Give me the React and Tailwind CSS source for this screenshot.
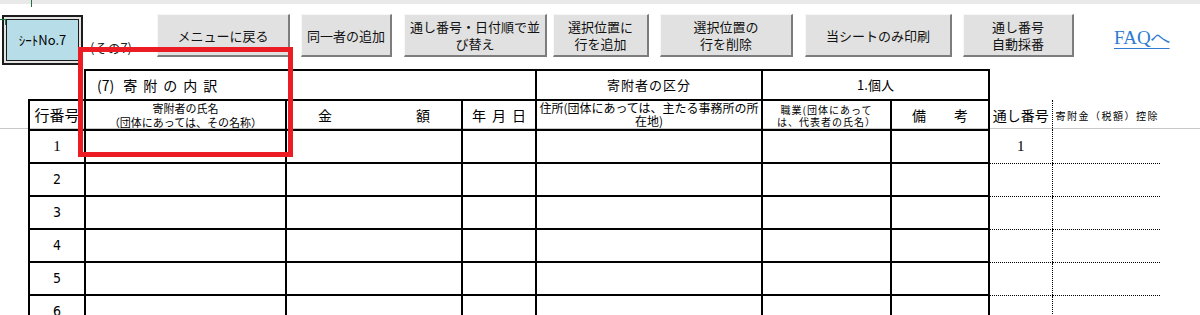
import React from 'react';

// 上部ボタン（幅と左マージンはクラス文字列で渡す）
const BUTTONS = [
  { w: 'w-[133px]', ml: 'ml-0', lines: ['メニューに戻る'] },
  { w: 'w-[91px]', ml: 'ml-[11px]', lines: ['同一者の追加'] },
  { w: 'w-[143px]', ml: 'ml-[12px]', lines: ['通し番号・日付順で並', 'び替え'] },
  { w: 'w-[96px]', ml: 'ml-[6px]', lines: ['選択位置に', '行を追加'] },
  { w: 'w-[133px]', ml: 'ml-[11px]', lines: ['選択位置の', '行を削除'] },
  { w: 'w-[147px]', ml: 'ml-[12px]', lines: ['当シートのみ印刷'] },
  { w: 'w-[111px]', ml: 'ml-[11px]', lines: ['通し番号', '自動採番'] },
];

function SheetButton({ w, ml, lines }) {
  return (
    <button
      className={`${w} ${ml} mt-[10px] h-[43px] shrink-0 flex flex-col items-center justify-center bg-[#e1e1e1] border border-t-[#f7f7f7] border-l-[#f7f7f7] border-r-2 border-b-2 border-r-[#7d7d7d] border-b-[#7d7d7d] text-[13px] leading-[17px] text-[#111]`}
    >
      {lines.map((l) => (
        <span key={l}>{l}</span>
      ))}
    </button>
  );
}

const solid = 'border-2 border-solid border-black';

export default function App() {
  const rows = [1, 2, 3, 4, 5, 6];

  return (
    <div className="relative isolate w-[1200px] h-[315px] overflow-hidden bg-white text-black font-['Noto_Sans_CJK_JP','Noto_Sans',sans-serif]">
      {/* 上端の帯 */}
      <div className="h-[4px] bg-[#e9e9e9]" />

      {/* ツールバー */}
      <div className="flex items-start h-[65px]">
        <div className="ml-[2px] mt-[11px] w-[81px] h-[50px] shrink-0 border-2 border-[#1c1c1c] bg-[#e4e4e4] p-[2px]">
          <div className="h-full border border-[#1c1c1c] bg-[#b7dee8] flex items-center justify-center text-[13px]">
            ｼｰﾄNo.7
          </div>
        </div>
        <div className="ml-[7px] w-[67px] shrink-0 mt-[36px] text-[13px] leading-[16px] text-[#222]">(その7)</div>
        {BUTTONS.map((b) => (
          <SheetButton key={b.lines.join('')} {...b} />
        ))}
        <a className="ml-[40px] mt-[22px] text-[19px] leading-[24px] font-['Liberation_Serif',serif] text-[#2e7bcf] underline underline-offset-[4px]">
          FAQへ
        </a>
      </div>

      {/* 表 */}
      <table className="ml-[28px] w-[1132px] table-fixed border-collapse">
        <colgroup>
          <col className="w-[56px]" />
          <col className="w-[201px]" />
          <col className="w-[176px]" />
          <col className="w-[74px]" />
          <col className="w-[226px]" />
          <col className="w-[129px]" />
          <col className="w-[98px]" />
          <col className="w-[63px]" />
          <col className="w-[108px]" />
        </colgroup>
        <tbody>
          <tr className="h-[30px]">
            <td />
            <td colSpan={3} className={`${solid} pl-[11px] text-[14px]`}>
              (7)<span className="ml-[9px] tracking-[6px]">寄附の内訳</span>
            </td>
            <td className={`${solid} text-center text-[13px] tracking-[1px]`}>寄附者の区分</td>
            <td colSpan={2} className={`${solid} text-center text-[13px]`}>1.個人</td>
            <td />
            <td />
          </tr>
          <tr className="h-[29px]">
            <td className={`${solid} text-center text-[15px] whitespace-nowrap`}>行番号</td>
            <td className={`${solid} text-center text-[11px] leading-[14px]`}>
              寄附者の氏名
              <br />
              （団体にあっては、その名称）
            </td>
            <td className={solid}>
              <div className="flex justify-between px-[31px] text-[14px]">
                <span>金</span>
                <span>額</span>
              </div>
            </td>
            <td className={solid}>
              <div className="flex justify-center gap-[6px] text-[14px]">
                <span>年</span>
                <span>月</span>
                <span>日</span>
              </div>
            </td>
            <td className={`${solid} align-top text-center text-[12px] leading-[13px]`}>
              <div className="leading-[14px]">住所(団体にあっては、主たる事務所の所</div>
              <div className="leading-[12px]">在地)</div>
            </td>
            <td className={`${solid} text-center text-[10px] tracking-[1px]`}>
              <div className="leading-[13px]">職業(団体にあって</div>
              <div className="leading-[12px]">は、代表者の氏名）</div>
            </td>
            <td className={solid}>
              <div className="flex justify-between px-[20px] text-[14px]">
                <span>備</span>
                <span>考</span>
              </div>
            </td>
            <td className="text-center text-[14px] whitespace-nowrap">通し番号</td>
            <td className="border-l border-dotted border-black pl-[3px] text-[10px] tracking-[1.5px] whitespace-nowrap">
              寄附金（税額）控除
            </td>
          </tr>
          {rows.map((n) => (
            <tr key={n} className="h-[33px]">
              <td
                className={`${solid} text-center ${
                  n === 1
                    ? "text-[15px] font-['Liberation_Serif',serif]"
                    : "text-[14px] font-['Liberation_Sans_Narrow','DejaVu_Sans_Condensed',sans-serif]"
                }`}
              >
                {n}
              </td>
              <td className={solid} />
              <td className={solid} />
              <td className={solid} />
              <td className={solid} />
              <td className={solid} />
              <td className={solid} />
              <td className="border-b border-dotted border-black text-center text-[15px] font-['Liberation_Serif',serif]">
                {n === 1 ? '1' : ''}
              </td>
              <td className="border-l border-b border-dotted border-black" />
            </tr>
          ))}
        </tbody>
      </table>

      {/* ウィンドウ枠固定の線 */}
      <div className="absolute left-0 top-[128px] w-full h-px bg-[#c8c8c8] -z-10" />

      {/* 選択セルの緑の枠 */}
      <div className="absolute left-[31px] top-0 w-px h-[7px] bg-[#217346]" />
      <div className="absolute left-0 top-[19px] w-[5px] h-px bg-[#217346]" />
      <div className="absolute left-[5px] top-[19px] w-px h-[6px] bg-[#217346]" />

      {/* 赤枠 */}
      <div className="absolute left-[78px] top-[47px] w-[215px] h-[110px] border-[5px] border-[#ec1c24]" />
    </div>
  );
}
